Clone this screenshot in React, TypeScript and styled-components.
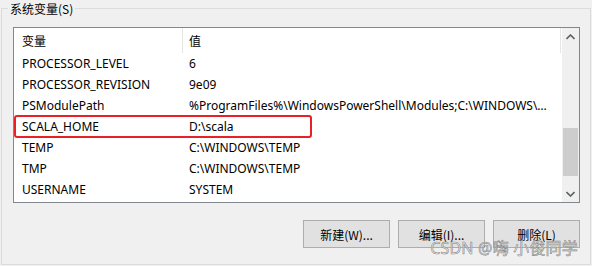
import { createGlobalStyle } from "styled-components";
import styled from "styled-components";

const GlobalStyle = createGlobalStyle`
    html, body {
        margin: 0;
        padding: 0;
        background: #f0f0f0;
    }
    body {
        font-family: "Noto Sans", "Noto Sans CJK SC", sans-serif;
        font-size: 12px;
        color: #000;
    }
`;

const Page = styled.div`
    position: relative;
    width: 592px;
    height: 266px;
    box-sizing: border-box;
    padding: 8px 1px 1px 1px;
    overflow: hidden;
`;

const GroupBox = styled.div`
    position: relative;
    height: 257px;
    box-sizing: border-box;
    border: 1px solid #dcdcdc;
    padding: 18px 10px 0 11px;
    display: flex;
    flex-direction: column;
`;

const Legend = styled.span`
    position: absolute;
    top: -9px;
    left: 6px;
    padding: 0 2px;
    background: #f0f0f0;
    line-height: 18px;
    color: #000;
    font-family: "Noto Sans CJK SC", sans-serif;
`;

const ListView = styled.div`
    height: 176px;
    box-sizing: border-box;
    border: 1px solid #828790;
    background: #fff;
    display: flex;
    overflow: hidden;
`;

const Table = styled.div`
    flex: 1;
    min-width: 0;
    display: flex;
    flex-direction: column;
`;

const Row = styled.div<{ $header?: boolean }>`
    position: relative;
    display: grid;
    grid-template-columns: 168px minmax(0, 1fr);
    height: ${(p) => (p.$header ? "25px" : "21px")};
    line-height: ${(p) => (p.$header ? "25px" : "21px")};
    flex-shrink: 0;
`;

const Cell = styled.div<{ $value?: boolean }>`
    height: 100%;
    min-width: 0;
    padding-left: ${(p) => (p.$value ? "7px" : "8px")};
    padding-right: ${(p) => (p.$value ? "12px" : "8px")};
    white-space: nowrap;
    overflow: hidden;
    text-overflow: ellipsis;
    box-sizing: border-box;
    font-family: "Noto Sans", "Noto Sans CJK SC", sans-serif;
`;

const HeaderCell = styled(Cell)`
    font-family: "Noto Sans CJK SC", sans-serif;
    border-left: ${(p) => (p.$value ? "1px solid #e5e5e5" : "none")};
    padding-left: ${(p) => (p.$value ? "6px" : "8px")};
`;

const HeaderRow = styled(Row)`
    border-right: 1px solid #e5e5e5;
    margin-right: 1px;
`;

const Highlight = styled.div`
    position: absolute;
    left: 0;
    top: -1px;
    width: 298px;
    height: 23px;
    box-sizing: border-box;
    border: 2px solid #ea2027;
    border-radius: 3px;
    pointer-events: none;
`;

const ScrollBar = styled.div`
    width: 17px;
    background: #f0f0f0;
    display: flex;
    flex-direction: column;
    align-items: center;
`;

const Arrow = styled.div`
    height: 17px;
    width: 17px;
    display: flex;
    align-items: center;
    justify-content: center;
`;

const Track = styled.div`
    flex: 1;
    width: 100%;
    display: flex;
    flex-direction: column;
    padding-top: 83px;
`;

const Thumb = styled.div`
    width: 15px;
    height: 48px;
    margin-left: 1px;
    background: #cdcdcd;
`;

const Buttons = styled.div`
    display: flex;
    justify-content: flex-end;
    gap: 8px;
    margin-top: 17px;
`;

const Button = styled.button`
    width: 87px;
    height: 28px;
    box-sizing: border-box;
    border: 1px solid #adadad;
    background: #e1e1e1;
    font-family: "Noto Sans CJK SC", "Noto Sans", sans-serif;
    font-size: 12px;
    color: #000;
    padding: 0;
`;

const Watermark = styled.div`
    position: absolute;
    right: 14px;
    bottom: 7px;
    font-family: "Noto Sans", "Noto Sans CJK SC", sans-serif;
    font-size: 16px;
    letter-spacing: 0.2px;
    color: rgba(235, 235, 235, 0.75);
    -webkit-text-stroke: 0.6px rgba(125, 125, 125, 0.9);
    white-space: nowrap;
    pointer-events: none;
`;

const rows: { name: string; value: string; mark?: boolean }[] = [
    { name: "PROCESSOR_LEVEL", value: "6" },
    { name: "PROCESSOR_REVISION", value: "9e09" },
    { name: "PSModulePath", value: "%ProgramFiles%\\WindowsPowerShell\\Modules;C:\\WINDOWS\\system32\\WindowsPowerShell\\v1.0\\Modules" },
    { name: "SCALA_HOME", value: "D:\\scala", mark: true },
    { name: "TEMP", value: "C:\\WINDOWS\\TEMP" },
    { name: "TMP", value: "C:\\WINDOWS\\TEMP" },
    { name: "USERNAME", value: "SYSTEM" },
];

const Chevron = ({ up }: { up?: boolean }) => (
    <svg width="9" height="6" viewBox="0 0 9 6">
        <path
            d={up ? "M0.5 5 L4.5 1 L8.5 5" : "M0.5 1 L4.5 5 L8.5 1"}
            fill="none"
            stroke="#606060"
            strokeWidth="1.6"
        />
    </svg>
);

const App = () => {
    return (
        <>
            <GlobalStyle />
            <Page>
                <GroupBox>
                    <Legend>系统变量(S)</Legend>
                    <ListView>
                        <Table>
                            <HeaderRow $header>
                                <HeaderCell>变量</HeaderCell>
                                <HeaderCell $value>值</HeaderCell>
                            </HeaderRow>
                            {rows.map((r) => (
                                <Row key={r.name}>
                                    <Cell>{r.name}</Cell>
                                    <Cell $value>{r.value}</Cell>
                                    {r.mark && <Highlight />}
                                </Row>
                            ))}
                        </Table>
                        <ScrollBar>
                            <Arrow><Chevron up /></Arrow>
                            <Track><Thumb /></Track>
                            <Arrow><Chevron /></Arrow>
                        </ScrollBar>
                    </ListView>
                    <Buttons>
                        <Button>新建(W)...</Button>
                        <Button>编辑(I)...</Button>
                        <Button>删除(L)</Button>
                    </Buttons>
                </GroupBox>
                <Watermark>CSDN @嗨 小俊同学</Watermark>
            </Page>
        </>
    );
};

export default App;
